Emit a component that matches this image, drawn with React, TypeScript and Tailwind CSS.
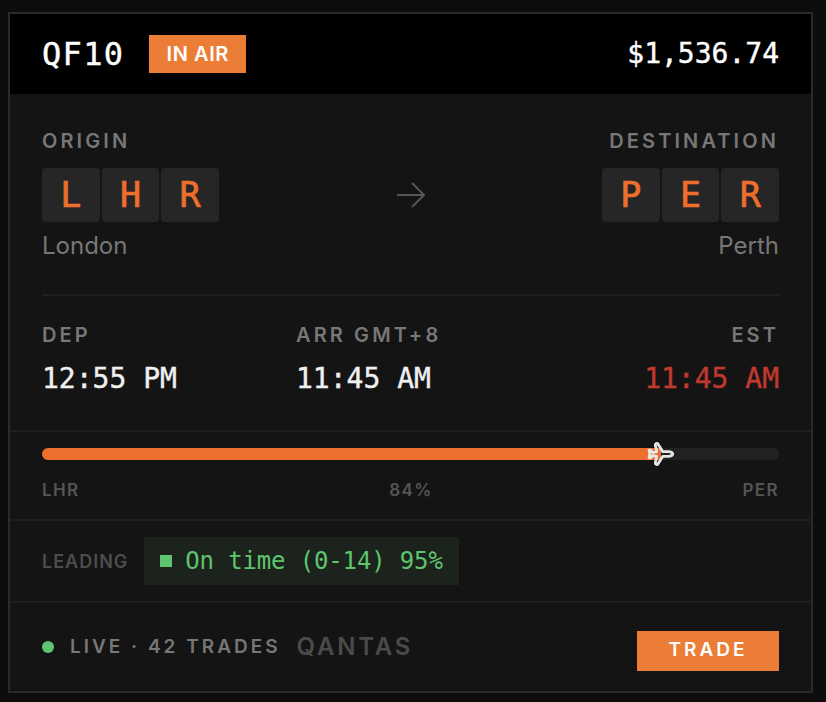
import { Plane } from 'lucide-react';

const MONO = "font-['DejaVu_Sans_Mono',monospace]";
const LABEL = 'text-[20px] font-semibold leading-[24px] tracking-[3.1px] text-[#777777]';

function Tile({ letter }: { letter: string }) {
  return (
    <div className={`flex h-[54px] w-[57.67px] items-center justify-center rounded-[4px] bg-[#262626] text-[35px] text-[#ee6f2d] [-webkit-text-stroke:0.7px_#ee6f2d] ${MONO}`}>
      {letter}
    </div>
  );
}

function Tiles({ code }: { code: string }) {
  return (
    <div className="mt-[15px] flex gap-[2px]">
      {code.split('').map((c, i) => (
        <Tile key={i} letter={c} />
      ))}
    </div>
  );
}

export default function App() {
  return (
    <div className="min-h-[702px] bg-[#0d0d0d] px-[8px] pt-[12px] font-['Inter',sans-serif]">
      <div className="h-[681px] w-[805px] border-2 border-[#2a2a2a] bg-[#141414]">
        <div className="flex h-[80px] items-center justify-between bg-black pl-[32px] pr-[32px]">
          <div className="flex items-center gap-[25px]">
            <span className={`text-[32px] tracking-[1.300px] text-white [-webkit-text-stroke:0.4px_#ffffff] ${MONO}`}>QF10</span>
            <span className="flex h-[38px] w-[97px] items-center justify-center bg-[#ec7d36] text-[20px] font-semibold tracking-[0.6px] text-white">
              IN AIR
            </span>
          </div>
          <span className={`text-[28px] text-white [-webkit-text-stroke:0.4px_#ffffff] ${MONO}`}>$1,536.74</span>
        </div>

        <div className="px-[32px] pt-[35px]">
          <div className="flex items-start justify-between border-b-2 border-[#1f1f1f] pb-[33px]">
            <div>
              <div className={LABEL}>ORIGIN</div>
              <Tiles code="LHR" />
              <div className="mt-[9px] text-[24px] leading-[30px] text-[#777777]">London</div>
            </div>
            <svg className="mt-[50px]" width="32" height="32" viewBox="0 0 32 32" fill="none" stroke="#555555" strokeWidth="2">
              <path d="M2 16h27M17 4l12 12-12 12" />
            </svg>
            <div className="flex flex-col items-end">
              <div className={LABEL}>DESTINATION</div>
              <Tiles code="PER" />
              <div className="mt-[9px] text-[24px] leading-[30px] text-[#777777]">Perth</div>
            </div>
          </div>

          <div className="flex justify-between pb-[34px] pt-[27px]">
            <div className="w-[254px]">
              <div className={LABEL}>DEP</div>
              <div className={`mt-[15px] text-[28px] leading-[34px] text-[#f0f0f0] [-webkit-text-stroke:0.4px_#f0f0f0] ${MONO}`}>12:55 PM</div>
            </div>
            <div className="flex-1">
              <div className={LABEL}>ARR GMT+8</div>
              <div className={`mt-[15px] text-[28px] leading-[34px] text-[#f0f0f0] [-webkit-text-stroke:0.4px_#f0f0f0] ${MONO}`}>11:45 AM</div>
            </div>
            <div className="flex flex-col items-end">
              <div className={LABEL}>EST</div>
              <div className={`mt-[15px] text-[28px] leading-[34px] text-[#c0392f] [-webkit-text-stroke:0.4px_#c0392f] ${MONO}`}>11:45 AM</div>
            </div>
          </div>
        </div>

        <div className="border-y-2 border-[#1f1f1f] px-[32px] pb-[17px] pt-[16px]">
          <div className="h-[12px] rounded-full bg-[#222222]">
            <div className="relative h-full w-[84%] rounded-l-full bg-[#ee6f2d]">
              <Plane
                size={26}
                strokeWidth={2.6}
                color="#e8e8e8"
                className="absolute right-[-11px] top-1/2 -translate-y-1/2 rotate-45"
              />
            </div>
          </div>
          <div className="mt-[18px] flex justify-between text-[17px] font-semibold leading-[24px] tracking-[1.360px] text-[#555555]">
            <span>LHR</span>
            <span>84%</span>
            <span>PER</span>
          </div>
        </div>

        <div className="flex h-[82px] items-center gap-[16px] border-b-2 border-[#1f1f1f] px-[32px]">
          <span className="text-[18px] font-semibold tracking-[1px] text-[#4d4d4d]">LEADING</span>
          <div className={`flex h-[48px] items-center gap-[13px] bg-[#1c231c] px-[16px] text-[24px] tracking-[-0.15px] text-[#5fc46f] ${MONO}`}>
            <span className="h-[12px] w-[12px] bg-[#5fc46f]" />
            <span>On time (0-14) 95%</span>
          </div>
        </div>

        <div className="flex items-center justify-between px-[32px] pt-[26px]">
          <div className="mb-[7px] flex items-center">
            <span className="h-[12px] w-[12px] rounded-full bg-[#5fc46f]" />
            <span className="ml-[16px] text-[19px] font-semibold tracking-[3px] text-[#777777]">LIVE · 42 TRADES</span>
            <span className="ml-[16px] text-[24px] font-semibold tracking-[2.8px] text-[#4a4a4a]">QANTAS</span>
          </div>
          <button className="h-[40px] w-[142px] bg-[#ec7d36] text-[19px] font-semibold tracking-[3px] text-white">TRADE</button>
        </div>
      </div>
    </div>
  );
}
